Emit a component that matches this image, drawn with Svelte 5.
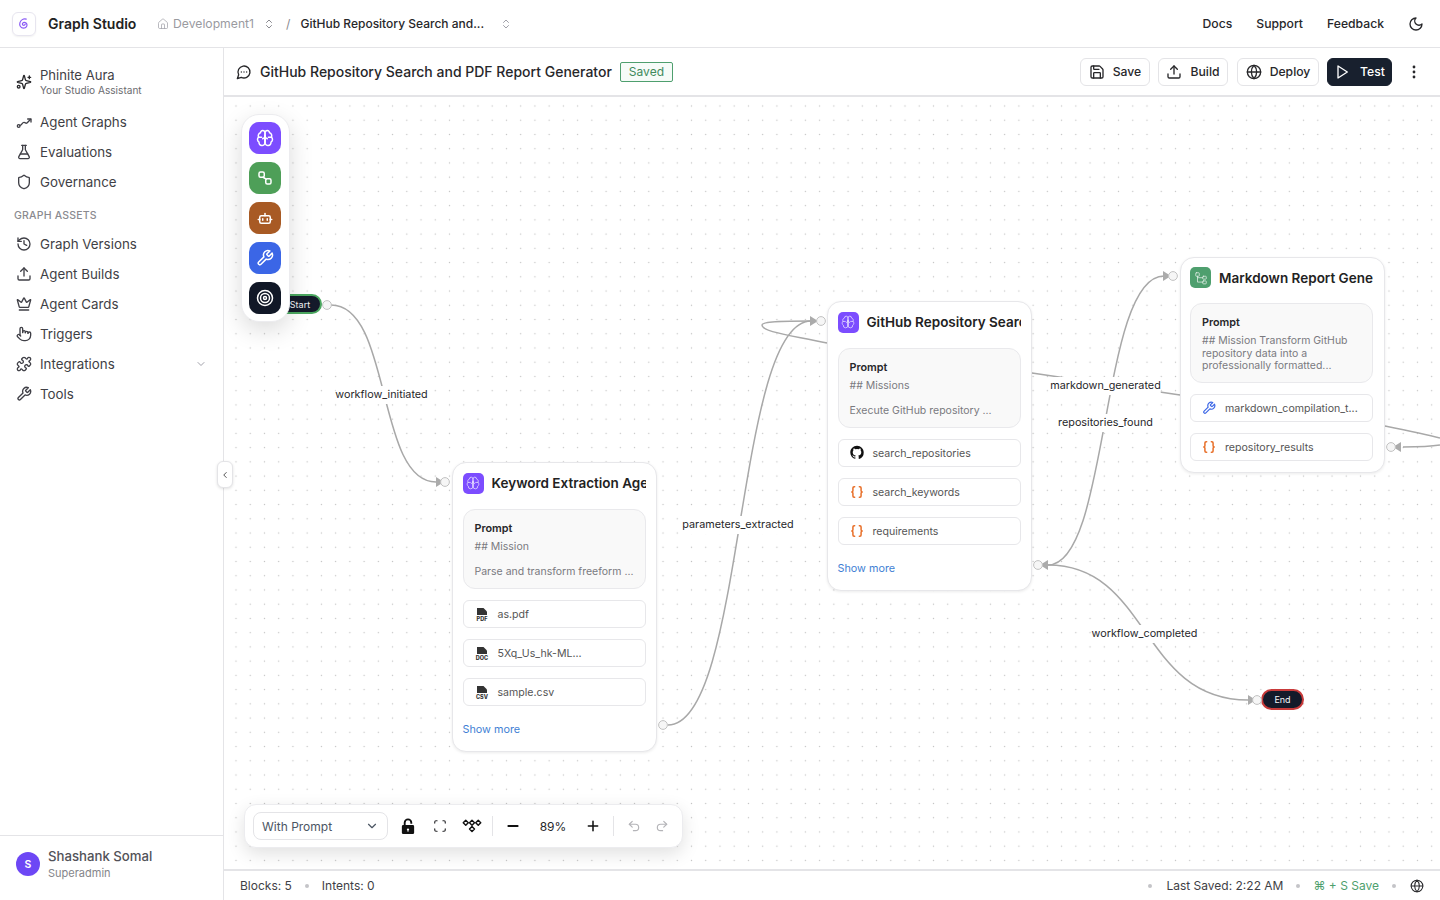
<script>
  const I = {
    sparkles: '<path d="M9.937 15.500A2 2 0 0 0 8.500 14.063l-6.135-1.582a.5.5 0 0 1 0-.962L8.500 9.936A2 2 0 0 0 9.937 8.500l1.582-6.135a.5.5 0 0 1 .963 0L14.063 8.500A2 2 0 0 0 15.500 9.937l6.135 1.581a.5.5 0 0 1 0 .964L15.500 14.063a2 2 0 0 0-1.437 1.437l-1.582 6.135a.5.5 0 0 1-.963 0z"/><path d="M20 3v4M22 5h-4"/><circle cx="4" cy="19" r="2"/>',
    graph: '<circle cx="4" cy="18" r="2"/><path d="M6 17c3-.5 3-4.500 6-4.500s2 2.500 4.500 1L22 8"/><path d="M17.500 7.500H22.500V12"/>',
    flask: '<path d="M14 2v6a2 2 0 0 0 .245.96l5.51 10.08A2 2 0 0 1 18 22H6a2 2 0 0 1-1.755-2.96l5.51-10.08A2 2 0 0 0 10 8V2"/><path d="M6.453 15h11.094"/><path d="M8.500 2h7"/>',
    shield: '<path d="M20 13c0 5-3.500 7.500-7.660 8.950a1 1 0 0 1-.670-.010C7.500 20.500 4 18 4 13V6a1 1 0 0 1 1-1c2 0 4.500-1.200 6.240-2.720a1.170 1.170 0 0 1 1.520 0C14.510 3.810 17 5 19 5a1 1 0 0 1 1 1z"/>',
    history: '<path d="M3 12a9 9 0 1 0 9-9 9.750 9.750 0 0 0-6.740 2.740L3 8"/><path d="M3 3v5h5"/><path d="M12 7v5l4 2"/>',
    upload: '<path d="M21 15v4a2 2 0 0 1-2 2H5a2 2 0 0 1-2-2v-4"/><polyline points="17 8 12 3 7 8"/><line x1="12" x2="12" y1="3" y2="15"/>',
    crown: '<path d="M11.562 3.266a.5.5 0 0 1 .876 0L15.390 8.870a1 1 0 0 0 1.516.294L21.183 5.500a.5.5 0 0 1 .798.519l-2.834 10.246a1 1 0 0 1-.956.734H5.810a1 1 0 0 1-.957-.734L2.020 6.020a.5.5 0 0 1 .798-.519l4.276 3.664a1 1 0 0 0 1.516-.294z"/><path d="M5 21h14"/>',
    hand: '<path d="M18 11v-1a2 2 0 0 0-2-2a2 2 0 0 0-2 2"/><path d="M14 10V9a2 2 0 0 0-2-2a2 2 0 0 0-2 2v1"/><path d="M10 9.500V4a2 2 0 0 0-2-2a2 2 0 0 0-2 2v10"/><path d="M18 11a2 2 0 1 1 4 0v3a8 8 0 0 1-8 8h-2c-2.800 0-4.500-.860-5.990-2.340l-3.600-3.600a2 2 0 0 1 2.830-2.820L7 15"/>',
    puzzle: '<path d="M19.439 7.850c-.049.322.059.648.289.878l1.568 1.568c.47.47.706 1.087.706 1.704s-.235 1.233-.706 1.704l-1.611 1.611a.98.98 0 0 1-.837.276c-.47-.07-.802-.48-.968-.925a2.501 2.501 0 1 0-3.214 3.214c.446.166.855.497.925.968a.979.979 0 0 1-.276.837l-1.61 1.61a2.404 2.404 0 0 1-1.705.707 2.402 2.402 0 0 1-1.704-.706l-1.568-1.568a1.026 1.026 0 0 0-.877-.29c-.493.074-.84.504-1.02.968a2.500 2.500 0 1 1-3.237-3.237c.464-.18.894-.527.967-1.020a1.026 1.026 0 0 0-.289-.877l-1.568-1.568A2.402 2.402 0 0 1 1.998 12c0-.617.236-1.234.706-1.704L4.230 8.770c.24-.24.581-.353.917-.303.515.077.877.528 1.073 1.010a2.500 2.500 0 1 0 3.259-3.259c-.482-.196-.933-.558-1.010-1.073-.05-.336.062-.676.303-.917l1.525-1.525A2.402 2.402 0 0 1 12 1.998c.617 0 1.234.236 1.704.706l1.568 1.568c.23.23.556.338.877.29.493-.074.84-.504 1.020-.968a2.500 2.500 0 1 1 3.237 3.237c-.464.18-.894.527-.967 1.020Z"/>',
    wrench: '<path d="M14.700 6.300a1 1 0 0 0 0 1.400l1.600 1.600a1 1 0 0 0 1.400 0l3.770-3.770a6 6 0 0 1-7.940 7.940l-6.910 6.910a2.120 2.120 0 0 1-3-3l6.910-6.910a6 6 0 0 1 7.940-7.940l-3.760 3.760z"/>',
    home: '<path d="M15 21v-8a1 1 0 0 0-1-1h-4a1 1 0 0 0-1 1v8"/><path d="M3 10a2 2 0 0 1 .709-1.528l7-5.999a2 2 0 0 1 2.582 0l7 5.999A2 2 0 0 1 21 10v9a2 2 0 0 1-2 2H5a2 2 0 0 1-2-2z"/>',
    updown: '<path d="m7 15 5 5 5-5"/><path d="m7 9 5-5 5 5"/>',
    moon: '<path d="M12 3a6 6 0 0 0 9 9 9 9 0 1 1-9-9Z"/>',
    save: '<path d="M15.200 3a2 2 0 0 1 1.400.6l3.800 3.800a2 2 0 0 1 .6 1.400V19a2 2 0 0 1-2 2H5a2 2 0 0 1-2-2V5a2 2 0 0 1 2-2z"/><path d="M17 21v-7a1 1 0 0 0-1-1H8a1 1 0 0 0-1 1v7"/><path d="M7 3v4a1 1 0 0 0 1 1h7"/>',
    globe: '<circle cx="12" cy="12" r="10"/><path d="M12 2a14.500 14.500 0 0 0 0 20 14.500 14.500 0 0 0 0-20"/><path d="M2 12h20"/>',
    play: '<polygon points="6 3 20 12 6 21 6 3"/>',
    chat: '<path d="M7.900 20A9 9 0 1 0 4 16.100L2 22Z"/><path d="M8 12h.01M12 12h.01M16 12h.01"/>',
    brain: '<path d="M12 5a3 3 0 1 0-5.997.125 4 4 0 0 0-2.526 5.770 4 4 0 0 0 .556 6.588A4 4 0 1 0 12 18Z"/><path d="M12 5a3 3 0 1 1 5.997.125 4 4 0 0 1 2.526 5.770 4 4 0 0 1-.556 6.588A4 4 0 1 1 12 18Z"/><path d="M15 13a4.500 4.500 0 0 1-3-4 4.500 4.500 0 0 1-3 4"/><path d="M12 9v9M3.500 11h4M20.500 11h-4"/>',
    link: '<rect x="4" y="4" width="7" height="7" rx="2"/><rect x="13" y="13" width="7" height="7" rx="2"/><path d="M9.500 11l4 2.500"/>',
    bot: '<path d="M12 9V6"/><rect width="14" height="10" x="5" y="9" rx="2"/><path d="M3 14h2M19 14h2M15 13v2M9 13v2"/>',
    target: '<circle cx="12" cy="12" r="10"/><circle cx="12" cy="12" r="6"/><circle cx="12" cy="12" r="2"/>',
    corners: '<path d="M3 7V5a2 2 0 0 1 2-2h2"/><path d="M17 3h2a2 2 0 0 1 2 2v2"/><path d="M21 17v2a2 2 0 0 1-2 2h-2"/><path d="M7 21H5a2 2 0 0 1-2-2v-2"/>',
    diamonds: '<path d="M4.500 5 7.500 8 4.500 11 1.500 8ZM12 5l3 3-3 3-3-3ZM19.500 5l3 3-3 3-3-3ZM12 12.500l3 3-3 3-3-3Z"/>',
    undo: '<path d="M9 14 4 9l5-5"/><path d="M4 9h10.500a5.500 5.500 0 0 1 5.500 5.500a5.500 5.500 0 0 1-5.500 5.500H11"/>',
    redo: '<path d="m15 14 5-5-5-5"/><path d="M20 9H9.500A5.500 5.500 0 0 0 4 14.500 5.500 5.500 0 0 0 9.500 20H13"/>',
    minus: '<path d="M5 12h14"/>',
    plus: '<path d="M5 12h14M12 5v14"/>',
    down: '<path d="m6 9 6 6 6-6"/>',
    left: '<path d="m15 18-6-6 6-6"/>',
    braces: '<path d="M8 3H7a2 2 0 0 0-2 2v5a2 2 0 0 1-2 2 2 2 0 0 1 2 2v5c0 1.100.9 2 2 2h1"/><path d="M16 21h1a2 2 0 0 0 2-2v-5c0-1.100.9-2 2-2a2 2 0 0 1-2-2V5a2 2 0 0 0-2-2h-1"/>',
    tree: '<rect x="3" y="3" width="6" height="6" rx="1"/><rect x="15" y="9" width="6" height="5" rx="1"/><rect x="15" y="17" width="6" height="5" rx="1"/><path d="M6 9v10h9M6 11.500h9"/>'
  };

  const top1 = [
    { n: 'graph', t: 'Agent Graphs' },
    { n: 'flask', t: 'Evaluations' },
    { n: 'shield', t: 'Governance' }
  ];
  const top2 = [
    { n: 'history', t: 'Graph Versions' },
    { n: 'upload', t: 'Agent Builds' },
    { n: 'crown', t: 'Agent Cards' },
    { n: 'hand', t: 'Triggers' },
    { n: 'puzzle', t: 'Integrations', more: true },
    { n: 'wrench', t: 'Tools' }
  ];
  const palette = [
    { n: 'brain', c: '#7c4dff' },
    { n: 'link', c: '#4e9f58' },
    { n: 'bot', c: '#a85a24' },
    { n: 'wrench', c: '#3b66e6' },
    { n: 'target', c: '#111827' }
  ];
  const nodes = [
    {
      x: 228, y: 365, h: 290, title: 'Keyword Extraction Agent', icon: 'brain', color: '#7c4dff',
      prompt: '## Mission\n\nParse and transform freeform ...',
      items: [{ k: 'file', l: 'PDF', t: 'as.pdf' }, { k: 'file', l: 'DOC', t: '5Xq_Us_hk-ML...' }, { k: 'file', l: 'CSV', t: 'sample.csv' }],
      more: true
    },
    {
      x: 603, y: 204, h: 290, title: 'GitHub Repository Search Agent', icon: 'brain', color: '#7c4dff',
      prompt: '## Missions\n\nExecute GitHub repository ...',
      items: [{ k: 'github', t: 'search_repositories' }, { k: 'braces', t: 'search_keywords' }, { k: 'braces', t: 'requirements' }],
      more: true
    },
    {
      x: 955.500, y: 159.500, h: 216, title: 'Markdown Report Generator', icon: 'tree', color: '#4e9f6e',
      prompt: '## Mission Transform GitHub repository data into a professionally formatted...',
      items: [{ k: 'wrench', t: 'markdown_compilation_t...' }, { k: 'braces', t: 'repository_results' }],
      more: false
    }
  ];
  const edgeLabels = [
    { x: 381.500, y: 394.500, t: 'workflow_initiated' },
    { x: 738, y: 524.500, t: 'parameters_extracted' },
    { x: 1105.500, y: 385.500, t: 'markdown_generated' },
    { x: 1105.500, y: 422.500, t: 'repositories_found' },
    { x: 1144.500, y: 633.500, t: 'workflow_completed' }
  ];
  const edges = [
    'M331 305C392 305 376 482 436 482',
    'M668 725C745 725 735 321 811 321',
    'M827 343C790 335 762 332 762 325C762 321 790 321 811 321',
    'M1032 373C1080 380 1140 389 1180 395',
    'M1048 565C1110 565 1100 276 1164 276',
    'M1048 565C1150 565 1140 700 1248 700',
    'M1385 426C1405 430 1425 434 1440 438',
    'M1403 447C1415 447 1428 447 1440 445'
  ];
  const arrows = ['436,477 444,482 436,487', '810,316 818,321 810,326', '1163,271 1171,276 1163,281', '1248,695 1256,700 1248,705', '1048,560 1040,565 1048,570', '1401,442 1393,447 1401,452'];
  const handles = [[327, 305], [445, 482], [663, 725], [821, 321], [1038, 565], [1173, 276], [1391, 447], [1257, 700]];
</script>

{#snippet icon(name, cls)}
  <svg class={cls} viewBox="0 0 24 24" fill="none" stroke="currentColor" stroke-width="2" stroke-linecap="round" stroke-linejoin="round">{@html I[name]}</svg>
{/snippet}

{#snippet navItem(item)}
  <div class="nav-item">
    {@render icon(item.n, 'ic16')}
    <span class="grow">{item.t}</span>
    {#if item.more}{@render icon('down', 'ic12 muted')}{/if}
  </div>
{/snippet}

<div class="app">
  <header class="topbar">
    <div class="logo">
      <svg viewBox="0 0 24 24" width="18" height="18" fill="none" stroke="#8b5cf6" stroke-width="1.600" stroke-linecap="round">
        <path d="M13.500 12a1.800 1.800 0 1 1-3.300-1c1-1.500 4-1.500 5.300.5 1.500 2.500-.5 6-4 6-3.800 0-6-3.500-5-7C7.500 7 11 4.500 15 5.500"/>
      </svg>
    </div>
    <span class="brand">Graph Studio</span>
    <nav class="crumbs">
      {@render icon('home', 'ic12 crumb-home')}
      <span class="crumb-env">Development1</span>
      {@render icon('updown', 'ic12 crumb-sw')}
      <span class="slash">/</span>
      <span class="crumb-cur">GitHub Repository Search and...</span>
      {@render icon('updown', 'ic12 crumb-sw2')}
    </nav>
    <div class="top-links">
      <span>Docs</span>
      <span>Support</span>
      <span>Feedback</span>
      {@render icon('moon', 'ic16 moon')}
    </div>
  </header>

  <div class="body">
    <aside class="sidebar">
      <div class="aura">
        {@render icon('sparkles', 'ic16')}
        <div class="aura-text">
          <div class="aura-name">Phinite Aura</div>
          <div class="aura-sub">Your Studio Assistant</div>
        </div>
      </div>
      {#each top1 as item}{@render navItem(item)}{/each}
      <div class="section">GRAPH ASSETS</div>
      {#each top2 as item}{@render navItem(item)}{/each}
      <div class="user">
        <div class="avatar">S</div>
        <div class="user-text">
          <div class="user-name">Shashank Somal</div>
          <div class="user-role">Superadmin</div>
        </div>
      </div>
      <button class="collapse" aria-label="Collapse">{@render icon('left', 'ic10')}</button>
    </aside>

    <main class="main">
      <div class="subbar">
        {@render icon('chat', 'ic16 chat')}
        <h1>GitHub Repository Search and PDF Report Generator</h1>
        <span class="saved">Saved</span>
        <div class="actions">
          <button class="btn w70">{@render icon('save', 'ic16')}Save</button>
          <button class="btn w70">{@render icon('upload', 'ic16')}Build</button>
          <button class="btn w82">{@render icon('globe', 'ic16')}Deploy</button>
          <button class="btn w65 dark">{@render icon('play', 'ic16')}Test</button>
          <svg class="kebab" viewBox="0 0 4 14" width="4" height="14"><circle cx="2" cy="2" r="1.400"/><circle cx="2" cy="7" r="1.400"/><circle cx="2" cy="12" r="1.400"/></svg>
        </div>
      </div>

      <section class="canvas">
        <svg class="edges" viewBox="224 97 1216 773" width="1216" height="773">
          {#each edges as d}<path {d} fill="none" stroke="#a8a8a8" stroke-width="1.500"/>{/each}
          {#each arrows as points}<polygon {points} fill="#ababab"/>{/each}
        </svg>

        <div class="pill start">Start</div>
        <div class="pill end">End</div>

        {#each nodes as node}
          <article class="node" style="left:{node.x}px;top:{node.y}px;height:{node.h}px">
            <div class="node-head">
              <span class="node-icon" style="background:{node.color}">{@render icon(node.icon, 'ic14')}</span>
              <span class="node-title">{node.title}</span>
            </div>
            <div class="prompt">
              <div class="prompt-label">Prompt</div>
              <div class="prompt-text">{node.prompt}</div>
            </div>
            <div class="items">
              {#each node.items as it}
                <div class="item">
                  <span class="item-icon">
                    {#if it.k === 'file'}
                      <svg viewBox="0 0 14 14" width="14" height="14">
                        <path d="M2 1h6.500L12 4.500V8H2Z" fill="#333"/>
                        <text x="7" y="13.500" text-anchor="middle" font-size="5.500" font-weight="800" fill="#333" font-family="Inter, sans-serif">{it.l}</text>
                      </svg>
                    {:else if it.k === 'github'}
                      <svg viewBox="0 0 24 24" width="15" height="15" fill="#111"><path d="M12 .5C5.650.5.5 5.650.5 12c0 5.080 3.290 9.390 7.860 10.910.58.11.79-.25.79-.55v-2.030c-3.200.7-3.870-1.360-3.870-1.360-.52-1.330-1.280-1.680-1.280-1.680-1.040-.71.08-.7.08-.7 1.150.08 1.760 1.180 1.760 1.180 1.030 1.760 2.690 1.250 3.350.96.1-.74.4-1.250.73-1.540-2.550-.29-5.240-1.280-5.240-5.690 0-1.260.45-2.280 1.180-3.090-.12-.29-.51-1.460.11-3.040 0 0 .97-.31 3.170 1.180a11 11 0 0 1 5.780 0c2.200-1.490 3.170-1.180 3.170-1.180.63 1.580.23 2.750.11 3.040.74.81 1.180 1.830 1.180 3.090 0 4.420-2.690 5.390-5.250 5.680.41.36.78 1.060.78 2.140v3.170c0 .31.21.67.8.55A11.500 11.500 0 0 0 23.500 12C23.500 5.650 18.350.5 12 .5z"/></svg>
                    {:else if it.k === 'braces'}
                      {@render icon('braces', 'ic14 orange')}
                    {:else}
                      {@render icon('wrench', 'ic14 blue')}
                    {/if}
                  </span>
                  <span class="item-text">{it.t}</span>
                </div>
              {/each}
            </div>
            {#if node.more}<div class="show-more">Show more</div>{/if}
          </article>
        {/each}

        <svg class="edges handles" viewBox="224 97 1216 773" width="1216" height="773">
          {#each handles as h}<circle cx={h[0]} cy={h[1]} r="4.400" fill="#f6f6f6" stroke="#c2c2c2"/>{/each}
        </svg>

        {#each edgeLabels as l}
          <span class="edge-label" style="left:{l.x - 224}px;top:{l.y - 97}px">{l.t}</span>
        {/each}

        <div class="palette">
          {#each palette as p}
            <span class="tile" style="background:{p.c}">{@render icon(p.n, 'ic18')}</span>
          {/each}
        </div>

        <div class="controls">
          <div class="select">With Prompt {@render icon('down', 'ic14')}</div>
          <svg class="lock" viewBox="0 0 14 18" width="14" height="17" fill="#111">
            <path d="M3.500 8V5a3.500 3.500 0 0 1 7 0v1" fill="none" stroke="#111" stroke-width="2"/>
            <path d="M2 7.500h10a1.500 1.500 0 0 1 1.500 1.500v6.500a1.500 1.500 0 0 1-1.500 1.500H2A1.500 1.500 0 0 1 .5 15.500V9A1.500 1.500 0 0 1 2 7.500Zm5 3.500a1.200 1.200 0 0 0-.5 2.300V14.500h1v-1.200A1.200 1.200 0 0 0 7 11Z" fill-rule="evenodd"/>
          </svg>
          {@render icon('corners', 'ic14 c-corners')}
          <svg class="c-diamonds" viewBox="0 0 24 24" width="20" height="20" fill="none" stroke="#111" stroke-width="1.700" stroke-linejoin="round">{@html I.diamonds}</svg>
          <span class="sep s1"></span>
          {@render icon('minus', 'ic16 c-minus')}
          <span class="zoom">89%</span>
          {@render icon('plus', 'ic16 c-plus')}
          <span class="sep s2"></span>
          {@render icon('undo', 'ic14 c-undo')}
          {@render icon('redo', 'ic14 c-redo')}
        </div>
      </section>

      <footer class="status">
        <span>Blocks: 5</span>
        <i class="dot d1"></i>
        <span>Intents: 0</span>
        <span class="grow"></span>
        <i class="dot d2"></i>
        <span>Last Saved: 2:22 AM</span>
        <i class="dot d3"></i>
        <span class="green">⌘ + S Save</span>
        <i class="dot d4"></i>
        {@render icon('globe', 'ic14 f-globe')}
      </footer>
    </main>
  </div>
</div>

<style>
  :global(body) { margin: 0; background: #fff; }
  .app { width: 1440px; height: 900px; overflow: hidden; display: flex; flex-direction: column; font-family: Inter, "Liberation Sans", sans-serif; color: #27272a; background: #fff; }
  .grow { flex: 1; }
  .ic10 { width: 10px; height: 10px; }
  .ic12 { width: 12px; height: 12px; flex: none; }
  .ic14 { width: 14px; height: 14px; flex: none; }
  .ic16 { width: 16px; height: 16px; flex: none; }
  .ic18 { width: 18px; height: 18px; flex: none; }
  .muted { color: #a1a1aa; }
  .orange { color: #e8702a; stroke-width: 2.600; }
  .blue { color: #3b66e6; }

  .topbar { height: 47px; flex: none; display: flex; align-items: center; padding-left: 12px; border-bottom: 1px solid #e4e4e7; }
  .logo { width: 22px; height: 22px; border: 1px solid #e7e5ef; border-radius: 6px; display: flex; align-items: center; justify-content: center; box-shadow: 0 1px 2px rgba(0,0,0,.06); }
  .brand { margin-left: 12px; font-size: 14px; font-weight: 600; color: #222; width: 109px; }
  .crumbs { display: flex; align-items: center; font-size: 12.200px; }
  .crumb-home { color: #a1a1aa; stroke-width: 1.500; }
  .crumb-env { margin-left: 4px; color: #9a9a9f; }
  .crumb-sw { margin-left: 9px; color: #8a8a90; }
  .slash { margin-left: 11px; color: #8a8a90; }
  .crumb-cur { margin-left: 10px; color: #27272a; font-weight: 500; font-size: 12px; }
  .crumb-sw2 { margin-left: 16px; color: #a1a1aa; }
  .top-links { margin-left: auto; display: flex; align-items: center; gap: 24px; font-size: 12.200px; font-weight: 500; color: #27272a; padding-right: 16px; }
  .moon { margin-left: 0; }

  .body { flex: 1; display: flex; min-height: 0; }
  .sidebar { position: relative; width: 223px; flex: none; border-right: 1px solid #e4e4e7; display: flex; flex-direction: column; z-index: 3; background: #fff; }
  .aura { display: flex; align-items: center; gap: 8px; padding: 19px 16px 0; height: 29px; margin-bottom: 11px; }
  .aura-name { font-size: 13.100px; line-height: 16px; color: #3f3f46; }
  .aura-sub { font-size: 10.100px; line-height: 14px; color: #6b6b70; }
  .nav-item { height: 30px; display: flex; align-items: center; gap: 8px; padding: 0 16px; font-size: 13.350px; color: #3f3f46; }
  .section { height: 32px; line-height: 38px; padding-left: 14px; font-size: 10.500px; font-weight: 500; color: #8a8a8f; letter-spacing: .2px; }
  .user { margin-top: auto; height: 65px; border-top: 1px solid #e4e4e7; display: flex; align-items: center; gap: 8px; padding: 0 16px 8px; box-sizing: border-box; }
  .user-text { margin-top: 2px; }
  .avatar { width: 24px; height: 24px; border-radius: 50%; background: #6d47f5; color: #fff; font-size: 10.500px; font-weight: 600; display: flex; align-items: center; justify-content: center; }
  .user-name { font-size: 13.200px; line-height: 17px; font-weight: 500; color: #525258; }
  .user-role { font-size: 11px; line-height: 17px; color: #85858a; }
  .collapse { position: absolute; left: 217px; top: 413px; width: 16px; height: 27px; padding: 0; background: #fff; border: 1px solid #e4e4e7; border-radius: 6px; display: flex; align-items: center; justify-content: center; color: #333; box-shadow: 0 1px 3px rgba(0,0,0,.12); }

  .main { flex: 1; min-width: 0; display: flex; flex-direction: column; }
  .subbar { height: 47px; flex: none; display: flex; align-items: center; padding: 0 12px; border-bottom: 2px solid #e4e4e7; background: #fff; box-sizing: content-box; }
  .chat { margin-right: 8px; }
  h1 { margin: 0; font-size: 14px; font-weight: 500; color: #27272a; }
  .saved { margin-left: 8px; padding: 0 8px; height: 18px; line-height: 18px; border: 1px solid #4e9f6e; border-radius: 2px; color: #3f8a5c; background: #f6fbf8; font-size: 12px; }
  .actions { margin-left: auto; display: flex; align-items: center; gap: 8px; }
  .btn { height: 28px; padding: 0; box-sizing: border-box; display: flex; align-items: center; justify-content: center; gap: 8px; background: #fff; border: 1px solid #e4e4e7; border-radius: 6px; font: 500 12.200px Inter, sans-serif; color: #27272a; }
  .w70 { width: 70px; }
  .w82 { width: 82px; margin-left: 1px; }
  .w65 { width: 65px; gap: 10px; }
  .btn.dark { background: #18202e; border-color: #18202e; color: #fff; }
  .kebab { fill: #27272a; margin: 0 12px 0 12px; }

  .canvas { position: relative; flex: 1; min-height: 0; overflow: hidden; background-color: #fff; background-image: radial-gradient(circle, #c2c2c2 .6px, transparent 1px); background-size: 14.240px 14.240px; background-position: 4.880px 1.880px; }
  .edges { position: absolute; left: 0; top: 0; pointer-events: none; }
  .handles { z-index: 2; }

  .pill { position: absolute; background: #141a2a; color: #f3f4f6; font-size: 9px; display: flex; align-items: center; justify-content: center; border-radius: 11px; box-sizing: border-box; height: 20px; border: 2px solid; }
  .start { left: 44px; top: 197px; width: 54px; border-color: #4ba760; padding-left: 10px; }
  .end { left: 1037px; top: 592px; width: 43px; height: 21px; border-color: #c83a3a; }

  .node { position: absolute; width: 205px; box-sizing: border-box; padding: 9.500px 10.500px 0 9.500px; background: #fff; border: 1.500px solid #e7e7ea; border-radius: 14px; box-shadow: 0 1px 3px rgba(0,0,0,.08); display: flex; flex-direction: column; z-index: 1; }
  .node-head { height: 21px; display: flex; align-items: center; gap: 8px; margin-bottom: 15px; min-width: 0; }
  .node-icon { width: 21px; height: 21px; flex: none; border-radius: 5px; display: flex; align-items: center; justify-content: center; color: #fff; }
  .node-icon svg { opacity: .85; stroke-width: 1.300; }
  .node-title { font-size: 13.500px; font-weight: 600; color: #222; white-space: nowrap; overflow: hidden; }
  .prompt { height: 80px; box-sizing: border-box; padding: 12px 11px 0; background: #f9f9f9; border: 1px solid #e9e9ec; border-radius: 12px; }
  .prompt-label { font-size: 10.800px; line-height: 14px; font-weight: 600; color: #27272a; margin-bottom: 5px; }
  .prompt-text { font-size: 10.500px; line-height: 12.500px; color: #7a7a7f; white-space: pre-line; }
  .items { margin-top: 11px; display: flex; flex-direction: column; gap: 11px; }
  .item { height: 28px; box-sizing: border-box; border: 1px solid #e7e7ea; border-radius: 6px; display: flex; align-items: center; padding-left: 11px; background: #fff; }
  .item-icon { width: 14px; height: 14px; display: flex; align-items: center; justify-content: center; }
  .item-text { margin: 1px 0 0 9px; font-size: 10.600px; color: #555; }
  .show-more { margin-top: 17px; font-size: 10.800px; line-height: 14px; color: #3f7fd4; }

  .edge-label { position: absolute; transform: translate(-50%, -50%); background: #fff; padding: 2px 0; font-size: 10.800px; line-height: 14px; color: #27272a; white-space: nowrap; z-index: 2; }

  .palette { position: absolute; left: 17px; top: 17px; width: 49px; height: 208px; padding: 7px; box-sizing: border-box; background: #fff; border: 1px solid #ececef; border-radius: 18px; box-shadow: 0 8px 24px rgba(0,0,0,.14); display: flex; flex-direction: column; align-items: flex-start; gap: 8px; z-index: 4; }
  .tile { width: 32px; height: 32px; flex: none; border-radius: 10px; display: flex; align-items: center; justify-content: center; color: #fff; }

  .controls { position: absolute; left: 20px; top: 707px; width: 439px; height: 44px; box-sizing: border-box; background: #fff; border: 1px solid #ececef; border-radius: 12px; box-shadow: 0 6px 18px rgba(0,0,0,.12); display: flex; align-items: center; padding-left: 8px; z-index: 4; color: #111; }
  .select { width: 135px; height: 28px; box-sizing: border-box; border: 1px solid #e4e4e7; border-radius: 8px; display: flex; align-items: center; justify-content: space-between; padding: 0 8px 0 8px; font-size: 12px; color: #4b5563; }
  .lock { margin-left: 13px; }
  .c-corners { margin-left: 18px; color: #27272a; }
  .c-diamonds { margin-left: 15px; }
  .sep { width: 1px; height: 20px; background: #e4e4e7; }
  .s1 { margin-left: 10px; }
  .c-minus { margin-left: 12px; stroke-width: 2.800; }
  .zoom { width: 40px; margin-left: 12px; text-align: center; font-size: 12px; color: #27272a; }
  .c-plus { margin-left: 12px; stroke-width: 2.300; }
  .s2 { margin-left: 12px; }
  .c-undo { margin-left: 13px; color: #b4b4b8; }
  .c-redo { margin-left: 14px; color: #b4b4b8; }

  .status { height: 29px; flex: none; border-top: 2px solid #e4e4e7; display: flex; align-items: center; padding: 0 16px; font-size: 12px; color: #3f3f46; }
  .dot { width: 4px; height: 4px; border-radius: 50%; background: #c4c4c8; }
  .d1 { margin: 0 13px; }
  .d2 { margin-right: 14px; }
  .d3 { margin: 0 13px; }
  .d4 { margin: 0 14px 0 13px; }
  .green { color: #4e9f6e; }
  .f-globe { color: #27272a; stroke-width: 1.800; }
</style>
